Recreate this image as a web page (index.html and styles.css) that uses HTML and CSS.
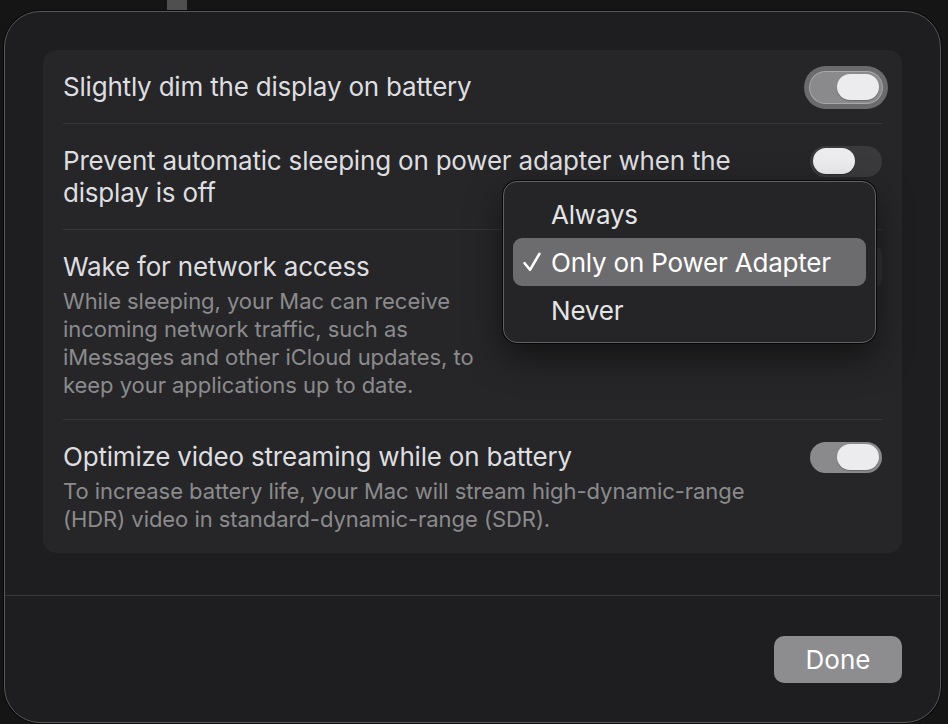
FILE: index.html
```html
<!DOCTYPE html>
<html>
<head>
<meta charset="utf-8">
<link rel="stylesheet" href="styles.css">
</head>
<body>
<div class="desk">
  <div class="strip-row"><div class="strip"></div></div>
  <div class="sheet">
    <div class="content">
      <div class="group">
        <div class="row">
          <div class="text">
            <div class="title">Slightly dim the display on battery</div>
          </div>
          <div class="toggle on focus"><span class="knob"></span></div>
        </div>
        <div class="sep"></div>
        <div class="row">
          <div class="text">
            <div class="title">Prevent automatic sleeping on power adapter when the<br>display is off</div>
          </div>
          <div class="toggle off"><span class="knob"></span></div>
        </div>
        <div class="sep"></div>
        <div class="row">
          <div class="text">
            <div class="title">Wake for network access</div>
            <div class="desc">While sleeping, your Mac can receive<br>incoming network traffic, such as<br>iMessages and other iCloud updates, to<br>keep your applications up to date.</div>
          </div>
          <div class="popup"></div>
        </div>
        <div class="sep"></div>
        <div class="row">
          <div class="text">
            <div class="title">Optimize video streaming while on battery</div>
            <div class="desc">To increase battery life, your Mac will stream high-dynamic-range<br>(HDR) video in standard-dynamic-range (SDR).</div>
          </div>
          <div class="toggle on"><span class="knob"></span></div>
        </div>
      </div>
    </div>
    <div class="footer">
      <button class="done">Done</button>
    </div>
    <div class="menu">
      <div class="item"><span class="check"></span><span>Always</span></div>
      <div class="item selected"><span class="check"><svg width="18" height="20" viewBox="0 0 18 20"><path d="M1.6 11.2 L7 17.8 L16.4 1.8" fill="none" stroke="#ffffff" stroke-width="2.6" stroke-linecap="round" stroke-linejoin="round"/></svg></span><span>Only on Power Adapter</span></div>
      <div class="item"><span class="check"></span><span>Never</span></div>
    </div>
  </div>
</div>
</body>
</html>
```
FILE: styles.css
```css
* { box-sizing: border-box; }

html, body {
  margin: 0;
  padding: 0;
  background: #151515;
  width: 948px;
  height: 724px;
  overflow: hidden;
  font-family: Inter, "Noto Sans", "Liberation Sans", sans-serif;
}

.desk {
  display: flex;
  flex-direction: column;
}

.strip-row {
  height: 11px;
  display: flex;
}

.strip {
  margin-left: 167px;
  width: 20px;
  height: 11px;
  background: #4f4f4f;
}

.sheet {
  position: relative;
  margin-left: 4px;
  width: 937px;
  height: 712px;
  background: #1e1e20;
  border: 1px solid #58585a;
  border-radius: 36px;
  box-shadow: 0 0 0 1px #0a0a0a;
  display: flex;
  flex-direction: column;
}

.content {
  padding: 38px 38px 42px;
}

.group {
  background: #262628;
  border-radius: 14px;
  display: flex;
  flex-direction: column;
}

.row {
  display: flex;
  justify-content: space-between;
  align-items: flex-start;
  padding: 21px 20px 20px;
}

.text {
  display: flex;
  flex-direction: column;
  gap: 4px;
}

.title {
  font-size: 26px;
  line-height: 32px;
  letter-spacing: -0.2px;
  color: #dedee0;
  white-space: nowrap;
}

.desc {
  font-size: 22px;
  line-height: 28px;
  letter-spacing: -0.05px;
  color: #8b8b8d;
  white-space: nowrap;
}

.sep {
  height: 1px;
  margin: 0 20px;
  background: #373739;
}

.toggle {
  width: 72px;
  height: 31px;
  border-radius: 16px;
  display: flex;
  align-items: center;
  padding: 0 3px;
  flex-shrink: 0;
  margin-top: 0.5px;
}

.toggle.on {
  background: #8a8a8c;
  justify-content: flex-end;
}

.toggle.off {
  background: #3a3a3c;
  justify-content: flex-start;
}

.toggle.focus {
  box-shadow: 0 0 0 1px #a8a8aa, 0 0 0 6px #6b6b6d;
}

.knob {
  width: 42px;
  height: 26px;
  border-radius: 13px;
  background: #ececee;
  box-shadow: 0 1px 1px rgba(0,0,0,0.25);
}

.popup {
  margin-top: -6px;
  width: 330px;
  height: 44px;
  border-radius: 10px;
  background: #313133;
  flex-shrink: 0;
}

.footer {
  border-top: 1px solid #39393b;
  padding: 40px 38px 38px;
  display: flex;
  justify-content: flex-end;
}

.done {
  width: 128px;
  height: 47px;
  border: none;
  border-radius: 10px;
  background: #8d8d8f;
  color: #ffffff;
  font-family: Inter, "Noto Sans", "Liberation Sans", sans-serif;
  font-size: 26px;
  padding: 0;
}

.menu {
  position: absolute;
  left: 498px;
  top: 169px;
  width: 373px;
  height: 162px;
  padding: 8px 9px;
  background: #252527;
  border: 1px solid #616163;
  border-radius: 14px;
  box-shadow: 0 0 0 1px rgba(0,0,0,0.7), 0 14px 34px rgba(0,0,0,0.5);
  display: flex;
  flex-direction: column;
}

.item {
  height: 48px;
  display: flex;
  align-items: center;
  gap: 10px;
  padding-left: 10px;
  border-radius: 9px;
  font-size: 26px;
  letter-spacing: -0.2px;
  color: #e4e4e6;
}

.item.selected {
  background: #6c6c6e;
  color: #ffffff;
}

.check {
  width: 18px;
  height: 20px;
  display: flex;
}
```
